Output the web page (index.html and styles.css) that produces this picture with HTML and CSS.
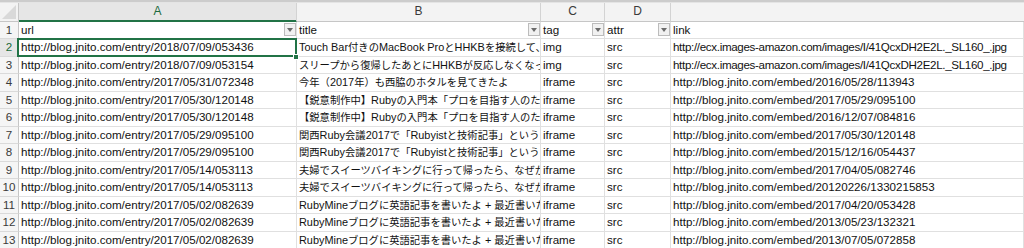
FILE: index.html
```html
<!DOCTYPE html>
<html lang="ja">
<head>
<meta charset="utf-8">
<title>Sheet</title>
<link rel="stylesheet" href="styles.css">
</head>
<body>
<div class="topbar"></div>
<div class="sheet">
  <div class="c corner"><svg class="tri" width="14" height="14" viewBox="0 0 14 14"><polygon points="14,0 14,14 0,14" fill="#d9d9d9"/></svg></div>
  <div class="c h hsel">A</div>
  <div class="c h">B</div>
  <div class="c h">C</div>
  <div class="c h">D</div>
  <div class="c h hlast"></div>

  <div class="c rn">1</div>
  <div class="c f"><span class="t">url</span><span class="fb"></span></div>
  <div class="c f"><span class="t">title</span><span class="fb"></span></div>
  <div class="c f"><span class="t">tag</span><span class="fb"></span></div>
  <div class="c f"><span class="t">attr</span><span class="fb"></span></div>
  <div class="c f"><span class="t">link</span></div>

  <div class="c rn rsel">2</div>
  <div class="c active">http://blog.jnito.com/entry/2018/07/09/053436<div class="selbox"></div><div class="handle"></div></div>
  <div class="c b">Touch Bar<span class="j">付きの</span>MacBook Pro<span class="j">と</span>HHKB<span class="j">を接続して、快適に使う方法</span></div>
  <div class="c">img</div>
  <div class="c">src</div>
  <div class="c tight">http://ecx.images-amazon.com/images/I/41QcxDH2E2L._SL160_.jpg</div>

  <div class="c rn">3</div>
  <div class="c">http://blog.jnito.com/entry/2018/07/09/053154</div>
  <div class="c b"><span class="j">スリープから復帰したあとに</span>HHKB<span class="j">が反応しなくなった場合の対処法</span></div>
  <div class="c">img</div>
  <div class="c">src</div>
  <div class="c tight">http://ecx.images-amazon.com/images/I/41QcxDH2E2L._SL160_.jpg</div>

  <div class="c rn">4</div>
  <div class="c">http://blog.jnito.com/entry/2017/05/31/072348</div>
  <div class="c b"><span class="j">今年（</span>2017<span class="j">年）も西脇のホタルを見てきたよ</span></div>
  <div class="c">iframe</div>
  <div class="c">src</div>
  <div class="c">http://blog.jnito.com/embed/2016/05/28/113943</div>

  <div class="c rn">5</div>
  <div class="c">http://blog.jnito.com/entry/2017/05/30/120148</div>
  <div class="c b"><span class="j">【鋭意制作中】</span>Ruby<span class="j">の入門本「プロを目指す人のためのRuby入門」</span></div>
  <div class="c">iframe</div>
  <div class="c">src</div>
  <div class="c">http://blog.jnito.com/embed/2017/05/29/095100</div>

  <div class="c rn">6</div>
  <div class="c">http://blog.jnito.com/entry/2017/05/30/120148</div>
  <div class="c b"><span class="j">【鋭意制作中】</span>Ruby<span class="j">の入門本「プロを目指す人のためのRuby入門」</span></div>
  <div class="c">iframe</div>
  <div class="c">src</div>
  <div class="c">http://blog.jnito.com/embed/2016/12/07/084816</div>

  <div class="c rn">7</div>
  <div class="c">http://blog.jnito.com/entry/2017/05/29/095100</div>
  <div class="c b"><span class="j">関西</span>Ruby<span class="j">会議</span>2017<span class="j">で「</span>Rubyist<span class="j">と技術記事」というタイトルで発表しました</span></div>
  <div class="c">iframe</div>
  <div class="c">src</div>
  <div class="c">http://blog.jnito.com/embed/2017/05/30/120148</div>

  <div class="c rn">8</div>
  <div class="c">http://blog.jnito.com/entry/2017/05/29/095100</div>
  <div class="c b"><span class="j">関西</span>Ruby<span class="j">会議</span>2017<span class="j">で「</span>Rubyist<span class="j">と技術記事」というタイトルで発表しました</span></div>
  <div class="c">iframe</div>
  <div class="c">src</div>
  <div class="c">http://blog.jnito.com/embed/2015/12/16/054437</div>

  <div class="c rn">9</div>
  <div class="c">http://blog.jnito.com/entry/2017/05/14/053113</div>
  <div class="c b"><span class="j">夫婦でスイーツバイキングに行って帰ったら、なぜか体重が減っていた</span></div>
  <div class="c">iframe</div>
  <div class="c">src</div>
  <div class="c">http://blog.jnito.com/embed/2017/04/05/082746</div>

  <div class="c rn">10</div>
  <div class="c">http://blog.jnito.com/entry/2017/05/14/053113</div>
  <div class="c b"><span class="j">夫婦でスイーツバイキングに行って帰ったら、なぜか体重が減っていた</span></div>
  <div class="c">iframe</div>
  <div class="c">src</div>
  <div class="c">http://blog.jnito.com/embed/20120226/1330215853</div>

  <div class="c rn">11</div>
  <div class="c">http://blog.jnito.com/entry/2017/05/02/082639</div>
  <div class="c b">RubyMine<span class="j">ブログに英語記事を書いたよ</span> + <span class="j">最近書いた記事のまとめ</span></div>
  <div class="c">iframe</div>
  <div class="c">src</div>
  <div class="c">http://blog.jnito.com/embed/2017/04/20/053428</div>

  <div class="c rn">12</div>
  <div class="c">http://blog.jnito.com/entry/2017/05/02/082639</div>
  <div class="c b">RubyMine<span class="j">ブログに英語記事を書いたよ</span> + <span class="j">最近書いた記事のまとめ</span></div>
  <div class="c">iframe</div>
  <div class="c">src</div>
  <div class="c">http://blog.jnito.com/embed/2013/05/23/132321</div>

  <div class="c rn">13</div>
  <div class="c">http://blog.jnito.com/entry/2017/05/02/082639</div>
  <div class="c b">RubyMine<span class="j">ブログに英語記事を書いたよ</span> + <span class="j">最近書いた記事のまとめ</span></div>
  <div class="c">iframe</div>
  <div class="c">src</div>
  <div class="c">http://blog.jnito.com/embed/2013/07/05/072858</div>
</div>
</body>
</html>
```
FILE: styles.css
```css
* { box-sizing: border-box; }
html, body { margin: 0; padding: 0; background: #fff; }
body {
  width: 1024px;
  height: 248px;
  overflow: hidden;
  font-family: "Liberation Sans", "Noto Sans CJK JP", sans-serif;
  color: #111;
}
.topbar {
  height: 3px;
  background: linear-gradient(#cccccc 0 2px, #e4e4e4 2px);
}
.sheet {
  display: grid;
  grid-template-columns: 19px 278px 244px 64px 66px 1fr;
  grid-template-rows: 18.5px repeat(13, 17.5px);
}
.c {
  border-right: 1px solid #e0e0e0;
  border-bottom: 1px solid #e0e0e0;
  padding-left: 2px;
  font-size: 11.6px;
  line-height: 16.5px;
  white-space: nowrap;
  overflow: hidden;
}
.b { font-size: 10.9px; }
.tight { letter-spacing: -0.33px; }
.j {
  font-family: "Noto Sans CJK JP", sans-serif;
  font-size: 10.3px;
}
.h {
  background: #f3f3f3;
  border-right-color: #d3d3d3;
  border-bottom-color: #c6c6c6;
  text-align: center;
  padding-left: 0;
  font-size: 12px;
  line-height: 17.5px;
  color: #3a3a3a;
}
.hlast { border-right: none; }
.hsel {
  background: #e6e6e6;
  color: #1d6b3e;
  border-bottom-color: #217346;
  box-shadow: inset 0 -1px 0 #217346;
}
.corner {
  background: #f3f3f3;
  border-right-color: #c6c6c6;
  border-bottom-color: #c6c6c6;
  padding: 0;
  display: flex;
  align-items: flex-end;
  justify-content: flex-end;
}
.tri { display: block; margin: 0 2px 2px 0; }
.rn {
  background: #f5f5f5;
  border-right-color: #c6c6c6;
  border-bottom-color: #dadada;
  text-align: center;
  padding-left: 0;
  color: #3a3a3a;
}
.rsel {
  background: #e6e6e6;
  color: #1d6b3e;
  border-right-color: #217346;
}
.f {
  display: flex;
  align-items: center;
}
.f .t { flex: 1; min-width: 0; }
.fb {
  flex: none;
  width: 12px;
  height: 13px;
  border: 1px solid #bcbcbc;
  background: #f1f1f1;
  display: flex;
  align-items: center;
  justify-content: center;
}
.fb::after {
  content: "";
  border-left: 3.5px solid transparent;
  border-right: 3.5px solid transparent;
  border-top: 4px solid #6b6b6b;
}
.active {
  position: relative;
  overflow: visible;
}
.selbox {
  position: absolute;
  left: -2px;
  top: -1px;
  right: -1px;
  bottom: -1px;
  border: 2px solid #217346;
}
.handle {
  position: absolute;
  right: -3px;
  bottom: -4px;
  width: 6px;
  height: 6px;
  background: #217346;
  border: 1px solid #fff;
}
```
